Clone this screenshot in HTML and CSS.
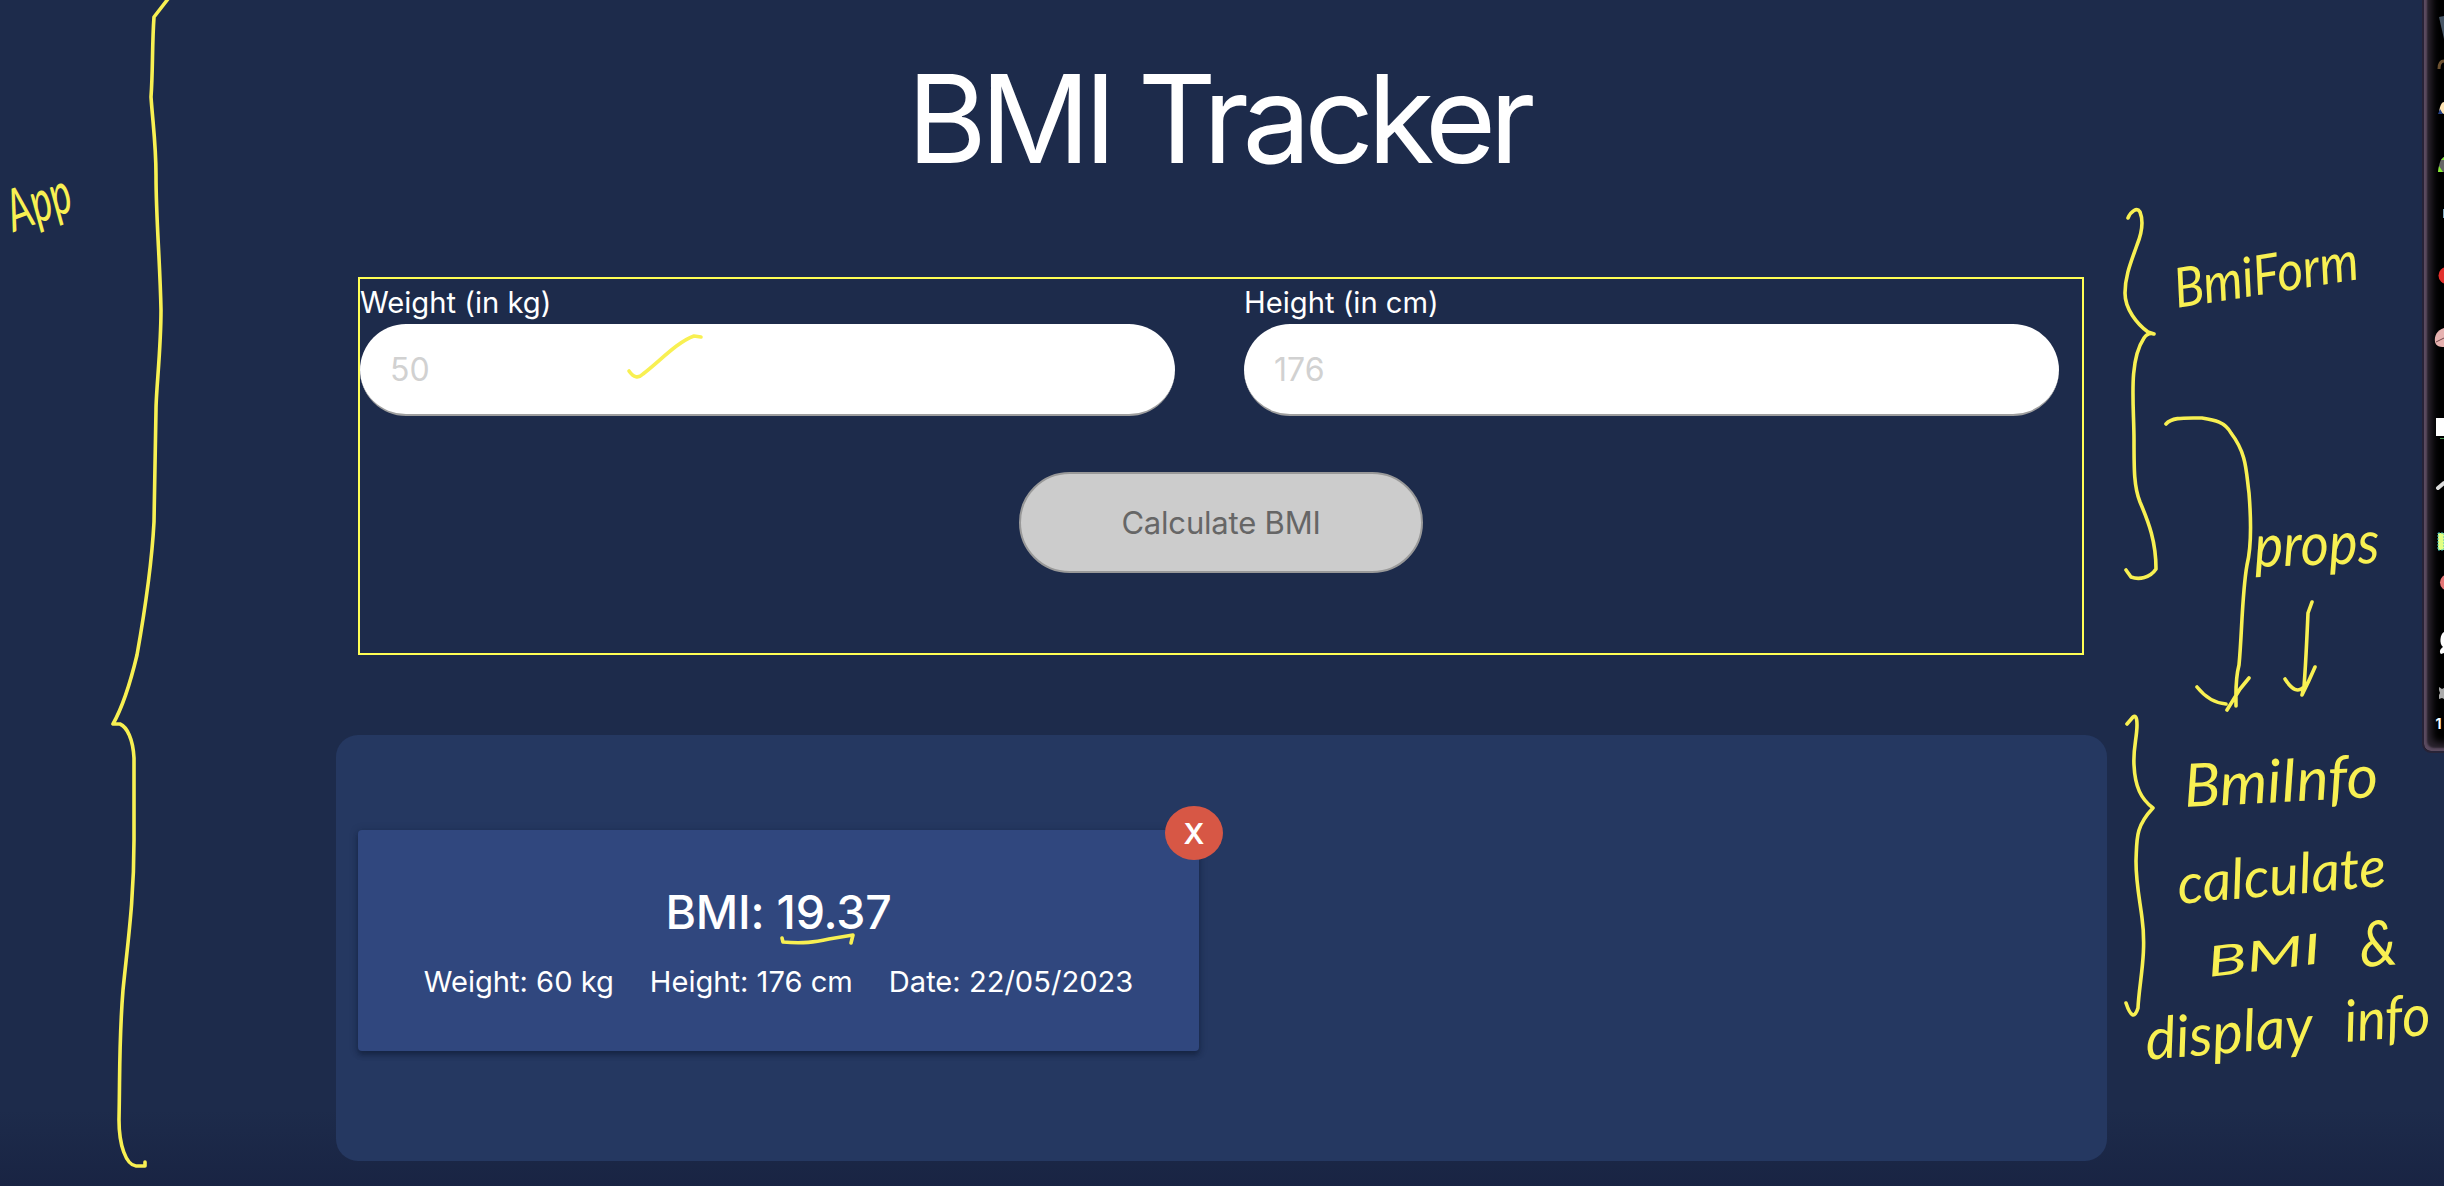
FILE: index.html
```html
<!DOCTYPE html>
<html lang="en">
<head>
<meta charset="utf-8">
<title>BMI Tracker</title>
<link rel="stylesheet" href="styles.css">
</head>
<body>
<main class="app">
  <h1 class="title">BMI Tracker</h1>
  <form class="bmi-form">
    <div class="fields">
      <label class="field"><span class="field-label">Weight (in kg)</span><input class="field-input" placeholder="50"></label>
      <label class="field"><span class="field-label">Height (in cm)</span><input class="field-input" placeholder="176"></label>
    </div>
    <button class="calculate" type="button" disabled>Calculate BMI</button>
  </form>
  <section class="results">
    <article class="card">
      <button class="remove" type="button">X</button>
      <h2 class="bmi">BMI: 19.37</h2>
      <div class="details"><span>Weight: 60 kg</span><span>Height: 176 cm</span><span>Date: 22/05/2023</span></div>
    </article>
  </section>
</main>

<aside class="palette">
  <svg class="palette-icons" width="22" height="753" viewBox="2422 0 22 753">
    <path d="M2439 17l5-1v23z" fill="#465565"/>
    <path d="M2439 69c0-5 2-8 5-8" fill="none" stroke="#6b5030" stroke-width="3"/>
    <path d="M2439 112c1-7 3-10 5-10v12z" fill="#ffe4b3"/><path d="M2438 114l2-5 3 5z" fill="#223e83"/>
    <path d="M2438 172c1-9 3-14 6-15v15z" fill="#666"/><path d="M2438 172l1-6 4 6zM2441 160l3-3v3z" fill="#86ed32"/>
    <path d="M2443 209h1v9h-1z" fill="#7fa6bb"/>
    <circle cx="2447" cy="275.500" r="8.500" fill="#e3302c"/>
    <path d="M2444 328c-7 2-10 8-9 14 1 4 4 5 9 5z" fill="#e6b1af"/><path d="M2436 342l8-4" stroke="#74494c" fill="none"/>
    <path d="M2436 418h8v18h-8z" fill="#fff"/><path d="M2440 438.500h4" stroke="#4c9b55"/>
    <path d="M2438 488l6-5" stroke="#ddd" stroke-width="4" stroke-linecap="round"/>
    <path d="M2438 533h6v17h-6z" fill="#e2ff83" stroke="#42bfc0" stroke-dasharray="2 1"/>
    <circle cx="2448" cy="582.500" r="8" fill="#e47575"/>
    <path d="M2444 632c-4 2-5 12-1 15-3 2-4 5-2 7l3-1z" fill="#fff"/>
    <path d="M2439 687l3 2 2-1v11l-2-1-3 1v-4l1-2-1-3z" fill="#aaa"/>
    <text class="palette-count" x="2435.500" y="729">1</text>
  </svg>
</aside>

<svg class="notes" width="2444" height="1186" viewBox="0 0 2444 1186">
  <g class="ink">
    <path d="M168-1L154 17C152 45 153 70 151 97C153 125 156 145 156 175C156 220 160 260 161 310C161 350 156 390 156 410L154 522C152 560 145 610 137 655Q126 701 113 724H120C127 727 133 739 134 758V840C134 900 128 940 123 990C119 1040 120 1070 119 1120C119 1145 126 1165 136 1166H145V1162"/>
    <path d="M2128 218C2131 211 2137 207 2140 212C2144 222 2141 235 2137 245C2131 262 2125 276 2125 293C2125 309 2137 324 2148 332L2154 334Q2148 332 2144 338C2128 362 2134 405 2134 440C2134 470 2134 487 2140 502C2149 523 2156 542 2156 569C2150 578 2139 580 2131 577L2126 570"/>
    <path d="M2166 424C2172 417 2184 418 2202 418C2215 420 2225 422 2231 433C2247 454 2246 471 2249 493C2251 518 2252 545 2247 565C2242 593 2242 634 2239 665C2235 680 2236 693 2236 706M2197 687C2205 697 2214 703 2226 704M2249 678L2240 689L2227 710"/>
    <path d="M2312 602L2308 613Q2306 660 2304 687M2285 679C2292 690 2298 693 2304 687L2302 695Q2309 681 2315 667"/>
    <path d="M2127 724L2133 717Q2137 714 2137 725C2137 738 2133 748 2134 765C2135 787 2141 799 2153 808C2135 827 2137 839 2136 861C2136 884 2140 901 2142 918C2147 954 2139 983 2138 1008Q2133 1024 2126 1003"/>
    <path d="M629 371Q636 381 643 374C659 362 677 342 694 336L701 337"/>
    <path d="M782 938L783 942C803 944 815 942 829 939L853 935L851 943"/>
  </g>
  <g class="script">
    <text transform="translate(14 232) rotate(-20)" font-size="58" textLength="66" lengthAdjust="spacingAndGlyphs">App</text>
    <text transform="translate(2177 308) rotate(-9)" font-size="55" textLength="186" lengthAdjust="spacingAndGlyphs">BmiForm</text>
    <text transform="translate(2255 567) rotate(-2)" font-size="60" textLength="125" lengthAdjust="spacingAndGlyphs">props</text>
    <text transform="translate(2185 807) rotate(-3)" font-size="60" textLength="194" lengthAdjust="spacingAndGlyphs">BmiInfo</text>
    <text transform="translate(2179 904) rotate(-5)" font-size="56" textLength="209" lengthAdjust="spacingAndGlyphs">calculate</text>
    <text transform="translate(2209 977) rotate(-7)" font-size="42" textLength="114" lengthAdjust="spacingAndGlyphs">BMI</text>
    <text transform="translate(2361 967) rotate(-4)" font-size="63" textLength="37" lengthAdjust="spacingAndGlyphs">&amp;</text>
    <text transform="translate(2147 1060) rotate(-5)" font-size="58" textLength="168" lengthAdjust="spacingAndGlyphs">display</text>
    <text transform="translate(2346 1042) rotate(-5)" font-size="58" textLength="86" lengthAdjust="spacingAndGlyphs">info</text>
  </g>
</svg>
</body>
</html>
```

FILE: styles.css
```css
* { box-sizing: border-box; }

body {
  margin: 0;
  height: 1186px;
  overflow: hidden;
  position: relative;
  background: linear-gradient(#1d2b4b 0, #1d2b4b 1110px, #192443 1186px);
  color: #fff;
  font-family: Inter, "Liberation Sans", sans-serif;
}

.app {
  width: 1771px;
  margin-left: 336px;
  display: flex;
  flex-direction: column;
  align-items: center;
}

.title {
  margin: 45px 0 0;
  height: 232px;
  padding-right: 7px;
  font-size: 122px;
  line-height: 148px;
  font-weight: 400;
  letter-spacing: -6.6px;
  white-space: nowrap;
}

.bmi-form {
  width: 1726px;
  height: 378px;
  margin-right: 1px;
  border: 2px solid #ffff54;
  display: flex;
  flex-direction: column;
  align-items: center;
}

.fields {
  width: 100%;
  display: flex;
  gap: 69px;
}

.field {
  width: 815px;
  display: flex;
  flex-direction: column;
}

.field-label {
  height: 45px;
  padding-top: 5px;
  font-size: 29.200px;
  line-height: 38px;
}

.field-input {
  height: 92px;
  padding: 0 30px;
  border: 0;
  border-bottom: 2px solid #9e9e9e;
  border-radius: 46px;
  background: #fff;
  font: 32px Inter, "Liberation Sans", sans-serif;
}

.field-input::placeholder { color: #d1d1d1; opacity: 1; }

.calculate {
  width: 404px;
  height: 101px;
  margin-top: 56px;
  border: 2px solid #999;
  border-radius: 51px;
  background: #ccc;
  color: #666;
  font: 31px Inter, "Liberation Sans", sans-serif;
  letter-spacing: -0.2px;
}

.results {
  width: 100%;
  height: 426px;
  margin-top: 80px;
  padding: 95px 22px;
  border-radius: 22px;
  background: #253861;
}

.card {
  position: relative;
  width: 841px;
  height: 221px;
  padding-top: 53px;
  border-radius: 4px;
  background: #30477e;
  box-shadow: 0 4px 5px rgba(12, 22, 45, 0.45), 0 1px 8px rgba(12, 22, 45, 0.25);
  text-align: center;
}

.bmi {
  margin: 0;
  font-size: 46.500px;
  line-height: 58px;
  font-weight: 500;
  letter-spacing: -0.2px;
}

.details {
  margin-top: 22px;
  display: flex;
  justify-content: center;
  gap: 36px;
  font-size: 29.100px;
  line-height: 38px;
}

.remove {
  position: absolute;
  top: -24px;
  right: -24px;
  width: 58px;
  height: 54px;
  padding: 0;
  border: 0;
  border-radius: 50%;
  background: #d75745;
  color: #fff;
  font: 600 29px Inter, "Liberation Sans", sans-serif;
}

/* Floating drawing palette, cut off by the window edge */
.palette {
  position: absolute;
  top: -10px;
  left: 2422px;
  width: 40px;
  height: 763px;
  padding-top: 10px;
  border: 2px solid #272337;
  border-radius: 9px;
  background: #000;
  box-shadow: inset 3px -3px 2px #5b4b60, inset 8px -8px 7px #2c2530;
  overflow: hidden;
}

.palette-icons { display: block; margin: -2px 0 0 -2px; }

.palette-count { fill: #fff; font: 700 14px Inter, sans-serif; }

.notes { position: absolute; inset: 0; pointer-events: none; }

.ink {
  fill: none;
  stroke: #f8f052;
  stroke-width: 3.6;
  stroke-linecap: round;
  stroke-linejoin: round;
}

.script {
  fill: #f8f052;
  font-family: Lato, "Liberation Sans", sans-serif;
  font-style: italic;
  font-weight: 400;
}
```
